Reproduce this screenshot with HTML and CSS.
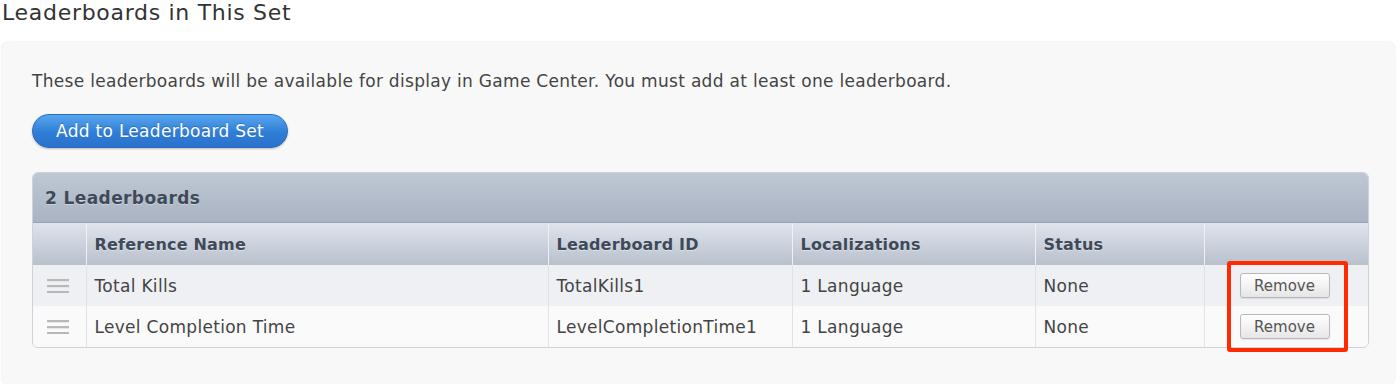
FILE: index.html
```html
<!DOCTYPE html>
<html lang="en">
<head>
    <meta charset="UTF-8">
    <title>Leaderboards in This Set</title>
    <link rel="stylesheet" href="styles.css">
</head>
<body>

<h2 class="title">Leaderboards in This Set</h2>

<div class="panel">
    <p class="intro">These leaderboards will be available for display in Game Center. You must add at least one leaderboard.</p>
    <button class="add-btn">Add to Leaderboard Set</button>

    <div class="table-box">
        <div class="table-caption">2 Leaderboards</div>
        <table class="lb-table">
            <colgroup>
                <col class="col-handle">
                <col class="col-name">
                <col class="col-id">
                <col class="col-loc">
                <col class="col-status">
                <col class="col-action">
            </colgroup>
            <thead>
                <tr>
                    <th></th>
                    <th>Reference Name</th>
                    <th>Leaderboard ID</th>
                    <th>Localizations</th>
                    <th>Status</th>
                    <th></th>
                </tr>
            </thead>
            <tbody>
                <tr class="odd">
                    <td class="handle-cell"><span class="handle"></span></td>
                    <td>Total Kills</td>
                    <td>TotalKills1</td>
                    <td>1 Language</td>
                    <td>None</td>
                    <td class="action-cell"><button class="remove-btn">Remove</button></td>
                </tr>
                <tr>
                    <td class="handle-cell"><span class="handle"></span></td>
                    <td>Level Completion Time</td>
                    <td>LevelCompletionTime1</td>
                    <td>1 Language</td>
                    <td>None</td>
                    <td class="action-cell"><button class="remove-btn">Remove</button></td>
                </tr>
            </tbody>
        </table>
        <!-- red highlight around the remove buttons -->
        <div class="highlight"></div>
    </div>
</div>

</body>
</html>
```

FILE: styles.css
```css
body {
    margin: 0;
    font-family: "DejaVu Sans", sans-serif;
    background-color: #ffffff;
    color: #444;
    overflow: hidden;
}

.title {
    margin: 0;
    padding: 0 0 0 2px;
    height: 42px;
    font-size: 22px;
    font-weight: normal;
    line-height: 26px;
    color: #333;
    letter-spacing: 0.7px;
}

.panel {
    box-sizing: border-box;
    margin: 0 5px 0 2px;
    height: 342px;
    background-color: #f8f8f9;
    border-radius: 6px;
    box-shadow: 0 0 2px rgba(0, 0, 0, 0.12);
    padding: 26px 26px 0 30px;
}

.intro {
    margin: 0 0 20px 0;
    font-size: 17px;
    letter-spacing: 0.3px;
    line-height: 26px;
    color: #444;
}

.add-btn {
    display: block;
    height: 34px;
    padding: 0 23px 0 23px;
    font-family: "DejaVu Sans", sans-serif;
    font-size: 17px;
    letter-spacing: 0.3px;
    color: #fff;
    border: 1px solid #2c6cc0;
    border-radius: 17px;
    background: linear-gradient(#58a6ee, #2f7dd6 55%, #2a72cc);
    box-shadow: 0 1px 2px rgba(0, 0, 0, 0.25);
    text-shadow: 0 -1px 0 rgba(0, 0, 0, 0.2);
    cursor: pointer;
}

.table-box {
    position: relative;
    margin-top: 24px;
    border: 1px solid #cdd3dc;
    border-radius: 6px;
}

.table-caption {
    height: 49px;
    line-height: 51px;
    padding-left: 12px;
    font-size: 17px;
    letter-spacing: 0.4px;
    font-weight: bold;
    color: #3e4a59;
    background: linear-gradient(#bfc7d3, #a9b3c3);
    border-bottom: 1px solid #98a3b3;
    border-radius: 5px 5px 0 0;
    text-shadow: 0 1px 0 rgba(255, 255, 255, 0.35);
}

.lb-table {
    width: 100%;
    table-layout: fixed;
    border-collapse: collapse;
    font-size: 17px;
    letter-spacing: 0.3px;
}

.col-handle { width: 53px; }
.col-name { width: 462px; }
.col-id { width: 244px; }
.col-loc { width: 243px; }
.col-status { width: 169px; }

.lb-table th {
    height: 42px;
    padding: 0 0 0 8px;
    text-align: left;
    font-size: 16px;
    letter-spacing: 0.2px;
    font-weight: bold;
    color: #3e4a59;
    background: linear-gradient(#dfe4eb, #b8c0cc);
    border-left: 1px solid #eef1f5;
    text-shadow: 0 1px 0 rgba(255, 255, 255, 0.4);
}

.lb-table td {
    height: 41px;
    padding: 0 0 0 8px;
    color: #444;
    border-left: 1px solid #dfe3e8;
    background-color: #fafafb;
}

.lb-table tr.odd td {
    background-color: #eef0f4;
}

.lb-table th:first-child,
.lb-table td:first-child {
    border-left: none;
}

.lb-table tbody tr:last-child td:first-child {
    border-bottom-left-radius: 5px;
}

.lb-table tbody tr:last-child td:last-child {
    border-bottom-right-radius: 5px;
}

.lb-table td.handle-cell {
    padding-left: 14px;
}

.handle {
    display: block;
    width: 22px;
    height: 14px;
    background: repeating-linear-gradient(#b8b8b8 0, #b8b8b8 2px, #e6e6e6 2px, #e6e6e6 3px, transparent 3px, transparent 6px);
}

.lb-table td.action-cell {
    padding-left: 35px;
}

.remove-btn {
    display: block;
    width: 90px;
    height: 25px;
    font-family: "DejaVu Sans", sans-serif;
    font-size: 15px;
    color: #555;
    background: linear-gradient(#ffffff, #e6e6e6);
    border: 1px solid #b8b8b8;
    border-radius: 3px;
    box-shadow: 0 1px 1px rgba(0, 0, 0, 0.08);
    cursor: pointer;
}

.highlight {
    position: absolute;
    left: 1194px;
    top: 88px;
    width: 113px;
    height: 83px;
    border: 4px solid #ff2a00;
    border-radius: 3px;
}
```
